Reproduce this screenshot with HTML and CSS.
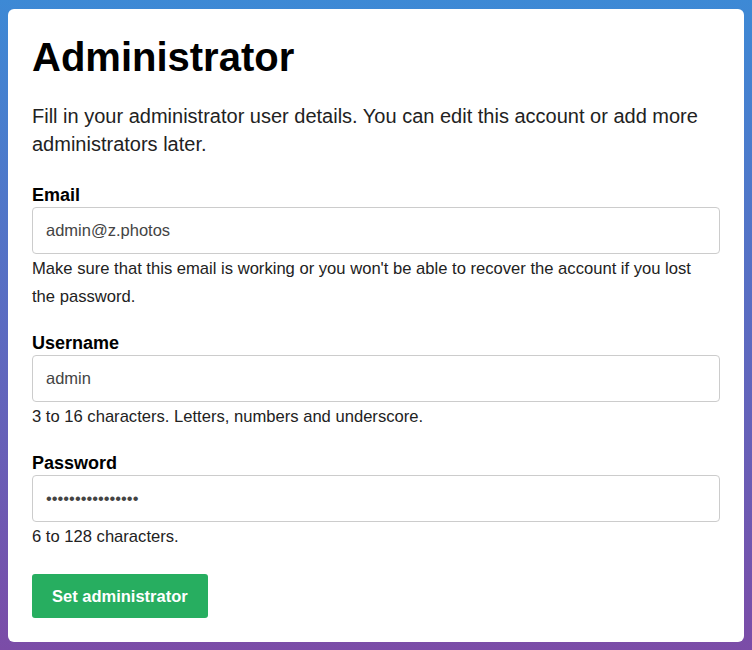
FILE: index.html
```html
<!DOCTYPE html>
<html lang="en">
<head>
<meta charset="utf-8">
<title>Administrator</title>
<link rel="stylesheet" href="styles.css">
</head>
<body>
<main class="card">
  <h1 class="title">Administrator</h1>
  <p class="intro">Fill in your administrator user details. You can edit this account or add more administrators later.</p>
  <form class="form">
    <div class="group">
      <label class="label" for="email">Email</label>
      <input class="input" id="email" type="text" value="admin@z.photos">
      <p class="help">Make sure that this email is working or you won't be able to recover the account if you lost the password.</p>
    </div>
    <div class="group">
      <label class="label" for="username">Username</label>
      <input class="input" id="username" type="text" value="admin">
      <p class="help">3 to 16 characters. Letters, numbers and underscore.</p>
    </div>
    <div class="group">
      <label class="label" for="password">Password</label>
      <input class="input" id="password" type="password" value="aaaaaaaaaaaaaaaa">
      <p class="help">6 to 128 characters.</p>
    </div>
    <div class="actions">
      <button class="button" type="button">Set administrator</button>
    </div>
  </form>
</main>
</body>
</html>
```
FILE: styles.css
```css
html {
  background: linear-gradient(to bottom, #3d89d5 0%, #5b6bc1 50%, #7b4ca7 100%);
  min-height: 100%;
}
body {
  margin: 0;
  padding: 9px 8px 8px;
  font-family: "Liberation Sans", Arial, sans-serif;
  color: #222;
}
.card {
  background: #fff;
  border-radius: 6px;
  padding: 24px;
}
.title {
  margin: 0;
  font-size: 40px;
  line-height: 48px;
  font-weight: bold;
  color: #000;
}
.intro {
  margin: 21px 0 25px;
  font-size: 20px;
  line-height: 28px;
  color: #222;
}
.form {
  margin: 0;
}
.group {
  margin-bottom: 20px;
}
.label {
  display: block;
  font-size: 18px;
  line-height: 24px;
  font-weight: bold;
  color: #000;
}
.input {
  display: block;
  box-sizing: border-box;
  width: 100%;
  height: 47px;
  margin: 0;
  padding: 0 13px;
  border: 1px solid #ccc;
  border-radius: 4px;
  font-family: "Liberation Sans", Arial, sans-serif;
  font-size: 16.5px;
  color: #444;
  background: #fff;
  outline: none;
}
.help {
  margin: 1px 0 0;
  padding-right: 8px;
  font-size: 16.6px;
  line-height: 28px;
  color: #222;
}
.actions {
  padding-top: 3px;
}
.button {
  display: block;
  height: 44px;
  padding: 0 20px;
  border: 0;
  border-radius: 3px;
  background: #27ae60;
  color: #fff;
  font-family: "Liberation Sans", Arial, sans-serif;
  font-size: 16.5px;
  font-weight: bold;
  cursor: pointer;
}
```
